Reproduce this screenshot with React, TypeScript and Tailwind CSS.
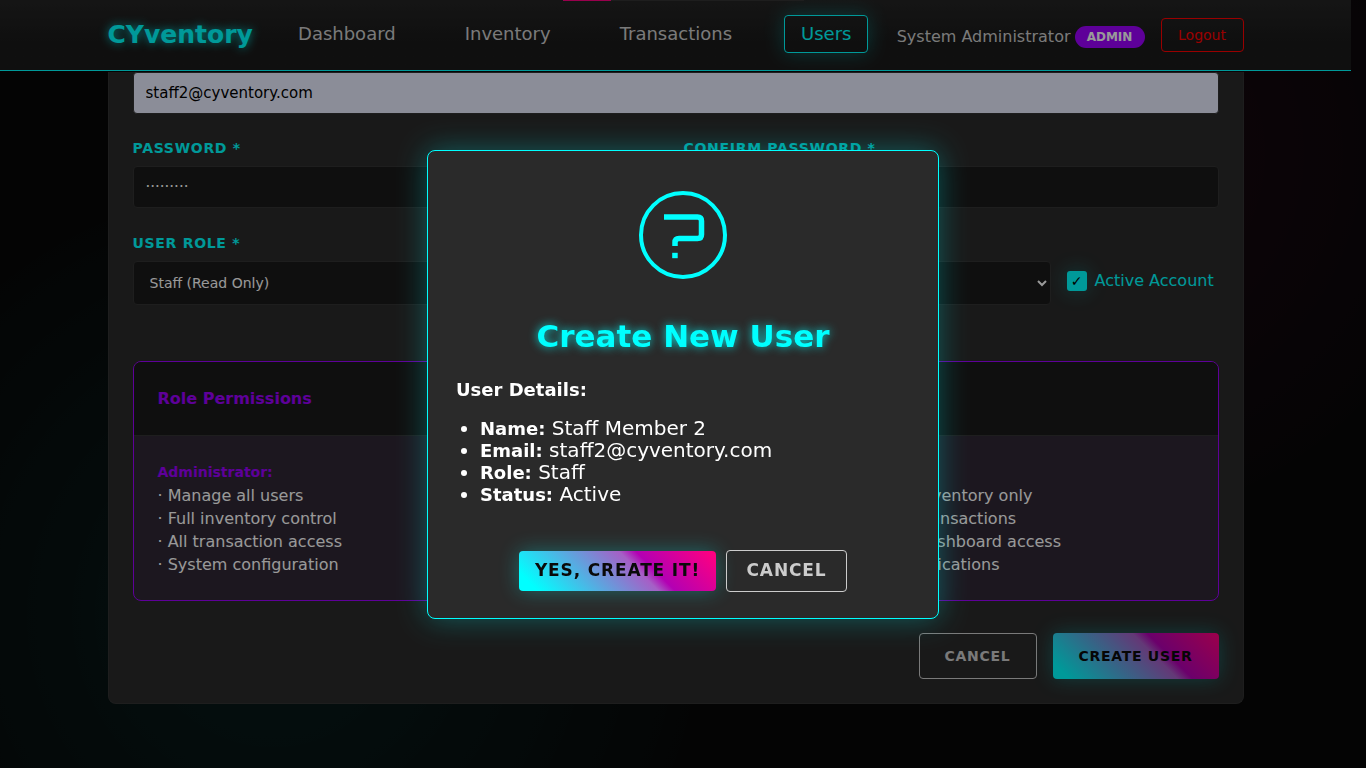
import React from "react";

const navLinks = ["Dashboard", "Inventory", "Transactions", "Users"];

const roles = [
  {
    name: "Administrator:",
    column: "col-start-1",
    items: ["Manage all users", "Full inventory control", "All transaction access", "System configuration"],
  },
  {
    name: "Staff:",
    column: "col-start-3",
    items: ["View inventory only", "View transactions", "View dashboard access", "No notifications"],
  },
];

const neonGradient =
  "bg-[linear-gradient(45deg,#00ffff_0%,#00ffff_8%,#a65fc6_59%,#b300b3_66%,#ff0080_98%)] shadow-[0_0_20px_rgba(0,255,255,0.3)]";

const labelClass = "mb-2 block text-[14px] leading-5 font-bold tracking-wider text-[#00ffff] uppercase";
const fieldClass =
  "block w-full rounded border border-[#333333] bg-[#1a1a1a] px-3 text-white outline-none";

function Header() {
  return (
    <header className="sticky top-0 z-10 border-b border-[#00ffff] bg-linear-to-b from-[#242424] to-[#1a1a1a] to-60%">
      <div className="mx-auto flex h-[70px] max-w-[1200px] items-center justify-between px-8">
        <a href="#" className="text-[25px] leading-8 font-bold text-[#00ffff] [text-shadow:0_0_10px_rgba(0,255,255,0.8)]">
          CYventory
        </a>
        <nav className="flex items-center gap-[35px] pb-[2px]">
          {navLinks.map((link) => (
            <a
              key={link}
              href="#"
              className={
                link === "Users"
                  ? "rounded border border-[#00ffff] px-4 py-[6px] text-[18px] leading-6 text-[#00ffff] shadow-[0_0_20px_rgba(0,255,255,0.3)]"
                  : "rounded border border-transparent px-4 py-[6px] text-[18px] leading-6 text-[#cccccc]"
              }
            >
              {link}
            </a>
          ))}
        </nav>
        <div className="flex items-center">
          <div className="flex items-center pt-1">
            <span className="text-[16px] text-[#cccccc]">System Administrator</span>
            <span className="ml-1 flex h-[22px] min-w-[70px] items-center justify-center rounded-full bg-[#9d00ff] px-3 text-[12px] font-bold text-white">
              ADMIN
            </span>
          </div>
          <button className="ml-4 h-[34px] min-w-[83px] rounded border border-[#ff0000] px-4 text-[14px] text-[#ff0000]">
            Logout
          </button>
        </div>
      </div>
    </header>
  );
}

function UserForm() {
  return (
    <form className="rounded-b-lg border border-t-0 border-[#333333] bg-[#2a2a2a] px-6 pb-6">
      <input
        aria-label="Email"
        type="email"
        defaultValue="staff2@cyventory.com"
        className="block h-[42px] w-full rounded border border-[#333333] bg-[#e8ecfe] px-3 text-[15px] text-black outline-none"
      />

      <div className="mt-6 grid grid-cols-2 gap-4">
        <div>
          <label htmlFor="password" className={labelClass}>Password *</label>
          <input id="password" type="text" defaultValue="·········" className={`${fieldClass} h-[42px] text-[15px]`} />
        </div>
        <div>
          <label htmlFor="confirm" className={labelClass}>Confirm Password *</label>
          <input id="confirm" type="text" className={`${fieldClass} h-[42px] text-[15px]`} />
        </div>
      </div>

      <div className="mt-[25px] flex items-center gap-4">
        <div className="flex-1">
          <label htmlFor="role" className={labelClass}>User Role *</label>
          <select id="role" className={`${fieldClass} h-11 pr-0 text-[14px]`}>
            <option>Staff (Read Only)</option>
          </select>
        </div>
        <label className="mt-6 flex min-w-[152px] items-center gap-2 text-[16px] text-[#00ffff]">
          <span className="grid size-5">
            <input
              type="checkbox"
              defaultChecked
              className="col-start-1 row-start-1 size-5 appearance-none rounded-[3px] bg-[#00ffff] shadow-[0_0_20px_rgba(0,255,255,0.3)]"
            />
            <span className="pointer-events-none z-[1] col-start-1 row-start-1 text-center text-[14px] leading-5 font-bold text-black">
              ✓
            </span>
          </span>
          Active Account
        </label>
      </div>

      <section className="mt-14 overflow-hidden rounded-lg border border-[#9d00ff]">
        <h3 className="border-b border-[#333333] bg-[#1a1a1a] px-6 py-6 text-[16px] leading-[25px] font-bold text-[#9d00ff]">
          Role Permissions
        </h3>
        <div className="grid grid-cols-3 gap-6 bg-[#9d00ff]/5 p-6">
          {roles.map((role) => (
            <div key={role.name} className={`${role.column} text-[16px] leading-[23px] text-white`}>
              <h4 className="text-[14px] leading-[24px] font-bold text-[#9d00ff]">{role.name}</h4>
              {role.items.map((item) => (
                <p key={item}>· {item}</p>
              ))}
            </div>
          ))}
        </div>
      </section>

      <div className="mt-8 flex justify-end gap-4">
        <button type="button" className="h-[46px] min-w-[118px] rounded border border-[#cccccc] px-6 text-[14px] font-bold tracking-wider text-[#cccccc]">
          CANCEL
        </button>
        <button type="button" className={`h-[46px] min-w-[166px] rounded px-6 text-[14px] font-bold tracking-wider text-[#0a0a0a] ${neonGradient}`}>
          CREATE USER
        </button>
      </div>
    </form>
  );
}

function QuestionIcon() {
  return (
    <svg viewBox="0 0 88 88" className="size-[88px]" fill="none" stroke="#00ffff" aria-hidden="true">
      <circle cx="44" cy="44" r="42" strokeWidth="4" />
      <path d="M25 26H58.5Q62.5 26 62.5 30V43.5Q62.5 47.5 58.5 47.5H40Q36 47.5 36 51.5V55" strokeWidth="5.5" />
      <rect x="33.2" y="61.8" width="5.5" height="5.4" fill="#00ffff" stroke="none" />
    </svg>
  );
}

function ConfirmDialog() {
  const details = [
    ["Name:", "Staff Member 2"],
    ["Email:", "staff2@cyventory.com"],
    ["Role:", "Staff"],
    ["Status:", "Active"],
  ];
  return (
    <div className="fixed inset-0 z-20 flex items-center justify-center bg-black/40">
      <div
        role="dialog"
        aria-labelledby="dialog-title"
        className="flex w-full max-w-[512px] flex-col items-center rounded-lg border border-[#00ffff] bg-[#2a2a2a] pt-10 pb-[26px] shadow-[0_0_30px_rgba(0,255,255,0.3)]"
      >
        <QuestionIcon />
        <h2 id="dialog-title" className="mt-[37px] text-[31px] leading-10 font-bold text-[#00ffff] [text-shadow:0_0_10px_rgba(0,255,255,0.8)]">
          Create New User
        </h2>
        <div className="mt-[23px] w-full px-7 leading-[22px] text-white">
          <p className="text-[18px] font-bold">User Details:</p>
          <ul className="mt-4 list-disc pl-6 text-[20px]">
            {details.map(([term, value]) => (
              <li key={term}>
                <strong className="text-[18px] leading-none">{term}</strong> {value}
              </li>
            ))}
          </ul>
        </div>
        <div className="mt-[45px] flex items-center gap-[10px]">
          <button className={`h-10 min-w-[197px] rounded px-3 text-[17px] font-bold tracking-wider text-[#0a0a0a] ${neonGradient}`}>
            YES, CREATE IT!
          </button>
          <button className="h-[42px] min-w-[121px] rounded border border-[#cccccc] px-4 text-[17px] font-bold tracking-wider text-[#cccccc]">
            CANCEL
          </button>
        </div>
      </div>
    </div>
  );
}

export default function App() {
  return (
    <div className="min-h-screen bg-[#080808] bg-[radial-gradient(circle_at_20%_80%,rgba(0,255,255,0.08)_0%,transparent_35%),radial-gradient(circle_at_80%_20%,rgba(255,0,128,0.08)_0%,transparent_30%)] font-['DejaVu_Sans',sans-serif]">
      <div className="pr-[15px]">
        <Header />
        <main className="mx-auto max-w-[1200px] px-8 pt-px">
          <UserForm />
        </main>
      </div>
      <div className="absolute top-0 left-[563px] z-10 h-px w-[241px] bg-[#333333]">
        <div className="h-px w-12 bg-[#ff0080]" />
      </div>
      <ConfirmDialog />
    </div>
  );
}
